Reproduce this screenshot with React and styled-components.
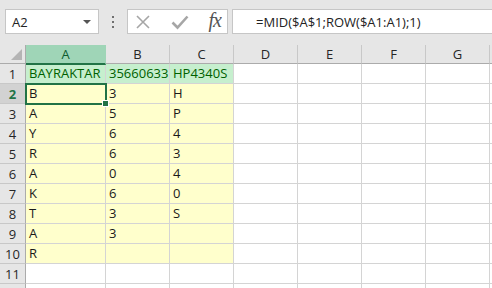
import React from "react";
import styled, { createGlobalStyle } from "styled-components";

const GlobalStyle = createGlobalStyle`
  body {
    margin: 0;
    font-family: "Open Sans", "Noto Sans", sans-serif;
  }
`;

const Screen = styled.div`
  width: 492px;
  height: 288px;
  overflow: hidden;
  background: #e6e6e6;
`;

const TopBar = styled.div`
  height: 45px;
  box-sizing: border-box;
  padding: 9px 0 0 5px;
  display: flex;
  align-items: flex-start;
`;

const NameBox = styled.div`
  width: 101px;
  height: 25px;
  box-sizing: border-box;
  border: 1px solid #c6c6c6;
  background: #fff;
  display: flex;
  align-items: center;
  justify-content: space-between;
  padding: 0 7px 0 6px;
  font-size: 13px;
  color: #222;
`;

const Caret = styled.span`
  width: 0;
  height: 0;
  border-left: 4px solid transparent;
  border-right: 4px solid transparent;
  border-top: 4px solid #555;
`;

const Dots = styled.div`
  width: 31px;
  height: 25px;
  display: flex;
  flex-direction: column;
  align-items: center;
  justify-content: center;
  gap: 3px;

  span {
    width: 2px;
    height: 2px;
    background: #6f6f6f;
  }
`;

const IconBox = styled.div`
  width: 109px;
  height: 25px;
  box-sizing: border-box;
  border: 1px solid #c6c6c6;
  background: #fff;
  display: flex;
  align-items: center;
  padding: 0 6px 0 7px;
  justify-content: space-between;
`;

const Fx = styled.span`
  font-family: "Liberation Serif", serif;
  font-style: italic;
  font-size: 20px;
  color: #555;
  letter-spacing: -1px;
  margin-top: -3px;
`;

const FormulaBox = styled.div`
  width: 260px;
  flex-shrink: 0;
  height: 25px;
  margin-left: 4px;
  box-sizing: border-box;
  border: 1px solid #c6c6c6;
  border-right: none;
  background: #fff;
  display: flex;
  align-items: center;
  padding-left: 23px;
  font-size: 13px;
  color: #222;
`;

const Sheet = styled.div`
  position: relative;
  display: grid;
  grid-template-columns: 26px 80px repeat(6, 64px) 1fr;
  grid-auto-rows: 20px;
  grid-template-rows: 19px;
  background: #fff;
`;

const Corner = styled.div`
  background: #e6e6e6;
  border-right: 1px solid #ababab;
  border-bottom: 1px solid #ababab;
  box-sizing: border-box;
  position: relative;

  &::after {
    content: "";
    position: absolute;
    right: 3px;
    bottom: 3px;
    border-left: 11px solid transparent;
    border-bottom: 11px solid #b4b4b4;
  }
`;

const ColHead = styled.div`
  box-sizing: border-box;
  background: ${(p) => (p.$active ? "#9fd5b7" : "#e6e6e6")};
  border-right: 1px solid ${(p) => (p.$active ? "#9fd5b7" : "#c8c8c8")};
  border-bottom: ${(p) => (p.$active ? "2px solid #217346" : "1px solid #ababab")};
  margin-bottom: ${(p) => (p.$active ? "-1px" : "0")};
  display: flex;
  justify-content: center;
  align-items: center;
  font-size: 13px;
  color: ${(p) => (p.$active ? "#0e5c2f" : "#262626")};
  z-index: ${(p) => (p.$active ? 1 : 0)};
`;

const RowHead = styled.div`
  box-sizing: border-box;
  background: ${(p) => (p.$active ? "#d2d2d2" : "#e6e6e6")};
  border-right: 1px solid #ababab;
  border-bottom: 1px solid #c8c8c8;
  display: flex;
  justify-content: center;
  align-items: center;
  font-size: 13px;
  font-weight: ${(p) => (p.$active ? 700 : 400)};
  color: ${(p) => (p.$active ? "#217346" : "#262626")};
`;

const fills = {
  good: { bg: "#c6efce", fg: "#006100" },
  note: { bg: "#ffffcc", fg: "#1a1a1a" },
  none: { bg: "#ffffff", fg: "#1a1a1a" },
};

const Cell = styled.div`
  box-sizing: border-box;
  background: ${(p) => fills[p.$fill].bg};
  color: ${(p) => fills[p.$fill].fg};
  border-right: 1px solid #d4d4d4;
  border-bottom: 1px solid #d4d4d4;
  font-size: 13px;
  line-height: 19px;
  padding-left: 3px;
  white-space: nowrap;
  overflow: hidden;
`;

const Selection = styled.div`
  position: absolute;
  left: 25px;
  top: 38px;
  width: 82px;
  height: 22px;
  box-sizing: border-box;
  border: 2px solid #217346;
  pointer-events: none;
`;

const Handle = styled.div`
  position: absolute;
  right: -4px;
  bottom: -4px;
  width: 5px;
  height: 5px;
  background: #217346;
  border: 1px solid #fff;
`;

// H is only a sliver at the right edge, so its letter is out of view
const columns = ["A", "B", "C", "D", "E", "F", "G", ""];

const data = [
  ["BAYRAKTAR", "35660633", "HP4340S"],
  ["B", "3", "H"],
  ["A", "5", "P"],
  ["Y", "6", "4"],
  ["R", "6", "3"],
  ["A", "0", "4"],
  ["K", "6", "0"],
  ["T", "3", "S"],
  ["A", "3", ""],
  ["R", "", ""],
  ["", "", ""],
  ["", "", ""],
];

const CancelIcon = () => (
  <svg width="16" height="16" viewBox="0 0 16 16">
    <path d="M2 2 L14 14 M14 2 L2 14" stroke="#a6a6a6" strokeWidth="1.6" />
  </svg>
);

const CheckIcon = () => (
  <svg width="18" height="16" viewBox="0 0 18 16">
    <path d="M1.5 8.5 L6.5 13.5 L16.5 2.5" stroke="#a6a6a6" strokeWidth="2.6" fill="none" />
  </svg>
);

const App = () => {
  return (
    <Screen>
      <GlobalStyle />
      <TopBar>
        <NameBox>
          A2
          <Caret />
        </NameBox>
        <Dots>
          <span />
          <span />
          <span />
        </Dots>
        <IconBox>
          <CancelIcon />
          <CheckIcon />
          <Fx>fx</Fx>
        </IconBox>
        <FormulaBox>=MID($A$1;ROW($A1:A1);1)</FormulaBox>
      </TopBar>
      <Sheet>
        <Corner />
        {columns.map((c, i) => (
          <ColHead key={i} $active={c === "A"}>
            {c}
          </ColHead>
        ))}
        {data.map((row, r) => (
          <React.Fragment key={r}>
            {/* row 12 is cut off before its number shows */}
            <RowHead $active={r === 1}>{r < 11 ? r + 1 : ""}</RowHead>
            {columns.map((c, i) => {
              let fill = "none";
              if (i < 3 && r === 0) fill = "good";
              else if (i < 3 && r < 10) fill = "note";
              return (
                <Cell key={i} $fill={fill}>
                  {i < 3 ? row[i] : ""}
                </Cell>
              );
            })}
          </React.Fragment>
        ))}
        <Selection>
          <Handle />
        </Selection>
      </Sheet>
    </Screen>
  );
};

export default App;
